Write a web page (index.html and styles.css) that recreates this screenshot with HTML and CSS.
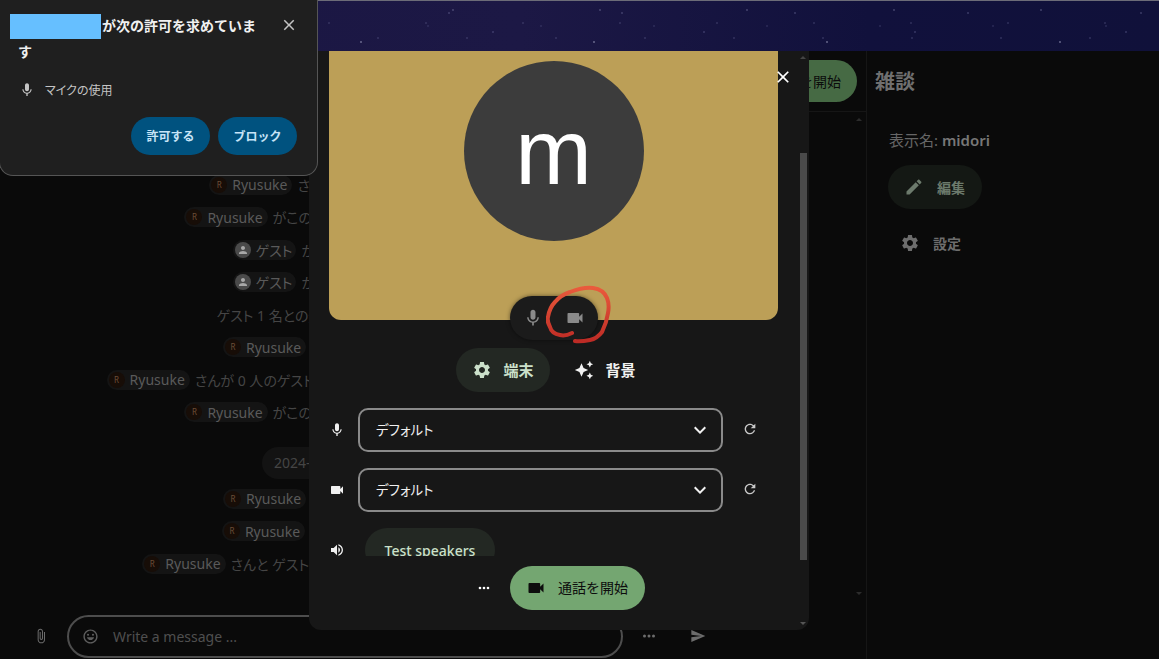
FILE: index.html
```html
<!DOCTYPE html>
<html lang="ja">
<head>
    <meta charset="UTF-8">
    <title>雑談</title>
    <link rel="stylesheet" href="styles.css">
</head>
<body>
    <svg class="sprite" aria-hidden="true">
        <symbol id="i-mic" viewBox="0 0 24 24"><path d="M12 14c1.66 0 2.99-1.34 2.99-3L15 5c0-1.66-1.34-3-3-3S9 3.34 9 5v6c0 1.66 1.34 3 3 3zm5.3-3c0 3-2.54 5.1-5.3 5.1S6.7 14 6.7 11H5c0 3.41 2.72 6.23 6 6.72V21h2v-3.28c3.28-.48 6-3.3 6-6.72h-1.7z"/></symbol>
        <symbol id="i-cam" viewBox="0 0 24 24"><path d="M17 10.5V7c0-.55-.45-1-1-1H4c-.55 0-1 .45-1 1v10c0 .55.45 1 1 1h12c.55 0 1-.45 1-1v-3.5l4 4v-11l-4 4z"/></symbol>
        <symbol id="i-gear" viewBox="0 0 24 24"><path d="M19.14 12.94c.04-.3.06-.61.06-.94 0-.32-.02-.64-.07-.94l2.03-1.58c.18-.14.23-.41.12-.61l-1.92-3.32c-.12-.22-.37-.29-.59-.22l-2.39.96c-.5-.38-1.03-.7-1.62-.94l-.36-2.54c-.04-.24-.24-.41-.48-.41h-3.84c-.24 0-.43.17-.47.41l-.36 2.54c-.59.24-1.13.57-1.62.94l-2.39-.96c-.22-.08-.47 0-.59.22L2.74 8.87c-.12.21-.08.47.12.61l2.03 1.58c-.05.3-.09.63-.09.94s.02.64.07.94l-2.03 1.58c-.18.14-.23.41-.12.61l1.92 3.32c.12.22.37.29.59.22l2.39-.96c.5.38 1.03.7 1.62.94l.36 2.54c.05.24.24.41.48.41h3.84c.24 0 .44-.17.47-.41l.36-2.54c.59-.24 1.13-.56 1.62-.94l2.39.96c.22.08.47 0 .59-.22l1.92-3.32c.12-.22.07-.47-.12-.61l-2.01-1.58zM12 15.6c-1.98 0-3.6-1.62-3.6-3.6s1.62-3.6 3.6-3.6 3.6 1.62 3.6 3.6-1.62 3.6-3.6 3.6z"/></symbol>
        <symbol id="i-spark" viewBox="0 0 24 24"><path d="M19 9l1.25-2.75L23 5l-2.75-1.25L19 1l-1.25 2.75L15 5l2.75 1.25L19 9zm-7.5.5L9 4 6.5 9.5 1 12l5.5 2.5L9 20l2.5-5.5L17 12l-5.5-2.5zM19 15l-1.25 2.75L15 19l2.75 1.25L19 23l1.25-2.75L23 19l-2.75-1.25L19 15z"/></symbol>
        <symbol id="i-chevron" viewBox="0 0 24 24"><path d="M16.59 8.59L12 13.17 7.41 8.59 6 10l6 6 6-6z"/></symbol>
        <symbol id="i-refresh" viewBox="0 0 24 24"><path d="M17.65 6.35C16.2 4.9 14.21 4 12 4c-4.42 0-7.99 3.58-7.99 8s3.57 8 7.99 8c3.73 0 6.84-2.55 7.73-6h-2.08c-.82 2.33-3.04 4-5.65 4-3.31 0-6-2.69-6-6s2.69-6 6-6c1.66 0 3.14.69 4.22 1.78L13 11h7V4l-2.35 2.35z"/></symbol>
        <symbol id="i-volume" viewBox="0 0 24 24"><path d="M3 9v6h4l5 5V4L7 9H3zm13.5 3c0-1.77-1.02-3.29-2.5-4.03v8.05c1.48-.73 2.5-2.25 2.5-4.02zM14 3.23v2.06c2.89.86 5 3.54 5 6.71s-2.11 5.85-5 6.71v2.06c4.01-.91 7-4.49 7-8.77s-2.99-7.86-7-8.77z"/></symbol>
        <symbol id="i-more" viewBox="0 0 24 24"><circle cx="6" cy="12" r="2"/><circle cx="12" cy="12" r="2"/><circle cx="18" cy="12" r="2"/></symbol>
        <symbol id="i-close" viewBox="0 0 24 24"><path d="M19 6.41L17.59 5 12 10.59 6.41 5 5 6.41 10.59 12 5 17.59 6.41 19 12 13.41 17.59 19 19 17.59 13.41 12z"/></symbol>
        <symbol id="i-edit" viewBox="0 0 24 24"><path d="M3 17.25V21h3.75L17.81 9.94l-3.75-3.75L3 17.25zM20.71 7.04c.39-.39.39-1.02 0-1.41l-2.34-2.34c-.39-.39-1.02-.39-1.41 0l-1.83 1.83 3.75 3.75 1.83-1.83z"/></symbol>
        <symbol id="i-send" viewBox="0 0 24 24"><path d="M2.01 21L23 12 2.01 3 2 10l15 2-15 2z"/></symbol>
        <symbol id="i-clip" viewBox="0 0 24 24"><path d="M16.5 6v11.5c0 2.21-1.79 4-4 4s-4-1.79-4-4V5c0-1.38 1.12-2.5 2.5-2.5s2.5 1.12 2.5 2.5v10.5c0 .55-.45 1-1 1s-1-.45-1-1V6H10v9.5c0 1.38 1.12 2.5 2.5 2.5s2.5-1.12 2.5-2.5V5c0-2.21-1.79-4-4-4S7 2.79 7 5v12.5c0 3.04 2.46 5.5 5.5 5.5s5.5-2.46 5.5-5.5V6h-1.5z"/></symbol>
        <symbol id="i-smile" viewBox="0 0 24 24"><path d="M11.99 2C6.47 2 2 6.48 2 12s4.47 10 9.99 10C17.52 22 22 17.52 22 12S17.52 2 11.99 2zM12 20c-4.42 0-8-3.58-8-8s3.58-8 8-8 8 3.58 8 8-3.58 8-8 8z"/><circle cx="8.5" cy="9.5" r="1.5"/><circle cx="15.5" cy="9.5" r="1.5"/><path d="M7 13h10c-.6 2.4-2.6 4-5 4s-4.400-1.600-5-4z"/></symbol>
        <symbol id="i-person" viewBox="0 0 24 24"><path d="M12 12c2.210 0 4-1.790 4-4s-1.790-4-4-4-4 1.790-4 4 1.790 4 4 4zm0 2c-2.670 0-8 1.340-8 4v2h16v-2c0-2.660-5.330-4-8-4z"/></symbol>
    </svg>

    <div class="banner"></div>

    <div class="page">
        <main class="chat">
            <header class="chat-head">
                <button class="start-dim">通話を開始</button>
            </header>
            <div class="chat-list">
                <div class="msg"><span class="chip"><span class="av">R</span>Ryusuke</span>さんが通話を開始しました。通話に参加するには下の通話 。</div>
                <div class="msg"><span class="chip"><span class="av">R</span>Ryusuke</span>がこの会話に参加しました。通話に参加するには下のボタンを押し 。</div>
                <div class="msg"><span class="chip chip-guest"><span class="av av-guest"><svg><use href="#i-person"/></svg></span>ゲスト</span>がこの会話に参加しました。通話に参加するには下の 。</div>
                <div class="msg"><span class="chip chip-guest"><span class="av av-guest"><svg><use href="#i-person"/></svg></span>ゲスト</span>がこの会話に参加しました。通話に参加するには下の 。</div>
                <div class="msg">ゲスト 1 名との通話が終了しました。通話の長さは 1234 分通話でした。</div>
                <div class="msg"><span class="chip"><span class="av">R</span>Ryusuke</span>さんが通話を開始しました。通話に参加するには通話 。</div>
                <div class="msg"><span class="chip"><span class="av">R</span>Ryusuke</span>さんが 0 人のゲストとの通話を開始しました。通話に参加するには下のボタンを押して開始中。</div>
                <div class="msg"><span class="chip"><span class="av">R</span>Ryusuke</span>がこの会話に参加しました。通話に参加するには下のボタンを押し 。</div>
                <div class="date-wrap"><span class="date">2024-03-15 金曜日</span></div>
                <div class="msg"><span class="chip"><span class="av">R</span>Ryusuke</span>さんが通話を開始しました。通話に参加するには通話 。</div>
                <div class="msg"><span class="chip"><span class="av">R</span>Ryusuke</span>さんが通話を開始しました。通話に参加するには 12通。</div>
                <div class="msg"><span class="chip"><span class="av">R</span>Ryusuke</span>さんと ゲスト の通話が終了しました。通話の長さは 12345 分でした。通話履歴の。</div>
                <span class="arrow arrow-up"></span>
                <span class="arrow arrow-down"></span>
            </div>
            <footer class="composer">
                <svg class="icon icon-clip"><use href="#i-clip"/></svg>
                <div class="message-box">
                    <svg class="icon"><use href="#i-smile"/></svg>
                    <span class="placeholder">Write a message ...</span>
                </div>
                <svg class="icon icon-more"><use href="#i-more"/></svg>
                <svg class="icon icon-send"><use href="#i-send"/></svg>
            </footer>
        </main>

        <aside class="side">
            <h2 class="side-title">雑談</h2>
            <p class="side-name">表示名: <b>midori</b></p>
            <button class="side-edit"><svg class="icon"><use href="#i-edit"/></svg>編集</button>
            <button class="side-settings"><svg class="icon"><use href="#i-gear"/></svg>設定</button>
        </aside>
    </div>

    <!-- call setup dialog -->
    <section class="modal">
        <div class="modal-body">
            <div class="tile">
                <div class="avatar">m</div>
                <div class="media-toggle">
                    <svg class="icon"><use href="#i-mic"/></svg>
                    <svg class="icon"><use href="#i-cam"/></svg>
                </div>
            </div>
            <div class="tabs">
                <button class="tab tab-active"><svg class="icon"><use href="#i-gear"/></svg><span class="label">端末</span></button>
                <button class="tab"><svg class="icon"><use href="#i-spark"/></svg><span class="label">背景</span></button>
            </div>
            <div class="device">
                <svg class="icon device-icon"><use href="#i-mic"/></svg>
                <div class="select"><span class="label">デフォルト</span><svg class="icon"><use href="#i-chevron"/></svg></div>
                <svg class="icon refresh"><use href="#i-refresh"/></svg>
            </div>
            <div class="device">
                <svg class="icon device-icon"><use href="#i-cam"/></svg>
                <div class="select"><span class="label">デフォルト</span><svg class="icon"><use href="#i-chevron"/></svg></div>
                <svg class="icon refresh"><use href="#i-refresh"/></svg>
            </div>
            <div class="device">
                <svg class="icon device-icon"><use href="#i-volume"/></svg>
                <button class="test-btn">Test speakers</button>
            </div>
        </div>
        <footer class="modal-foot">
            <svg class="icon icon-dots"><use href="#i-more"/></svg>
            <button class="start"><svg class="icon"><use href="#i-cam"/></svg><span class="label">通話を開始</span></button>
        </footer>
        <svg class="icon modal-close"><use href="#i-close"/></svg>
        <div class="scrollbar"></div>
        <span class="arrow modal-arrow-up"></span>
        <span class="arrow modal-arrow-down"></span>
        <!-- hand drawn mark on the screenshot -->
        <svg class="scribble" viewBox="0 0 66 60">
            <defs>
                <linearGradient id="pen" x1="0" y1="0" x2="0" y2="1">
                    <stop offset="0" stop-color="#ea5a3c"/>
                    <stop offset="1" stop-color="#bd2b25"/>
                </linearGradient>
            </defs>
            <path d="M26 48C22 50 18 51 14 50C8 49 5 46 4 42C2 38 1 36 2 32C3 26 5 21 9 17C13 12 18 9 24 7C32 4 40 2 47 3C54 4 59 8 61 13C63 18 63 23 62 28C61 35 59 41 56 47C53 51 49 54 44 55C39 56 34 57 29 56"/>
        </svg>
    </section>

    <!-- browser permission prompt -->
    <section class="prompt">
        <div class="prompt-head">
            <h3 class="prompt-title"><span class="redact"></span>が次の許可を求めています</h3>
            <svg class="icon prompt-close"><use href="#i-close"/></svg>
        </div>
        <div class="prompt-row"><svg class="icon"><use href="#i-mic"/></svg>マイクの使用</div>
        <div class="prompt-actions">
            <button class="prompt-btn">許可する</button>
            <button class="prompt-btn">ブロック</button>
        </div>
    </section>
</body>
</html>
```

FILE: styles.css
```css
/* General Styles */
* {
    box-sizing: border-box;
}

body {
    margin: 0;
    height: 659px;
    overflow: hidden;
    display: flex;
    flex-direction: column;
    background-color: #0a0a0a;
    color: #5a5a5a;
    font-family: "Noto Sans", "Noto Sans CJK JP", sans-serif;
    font-size: 14px;
    font-feature-settings: "palt";
}

button {
    border: none;
    font-family: inherit;
    font-feature-settings: inherit;
    cursor: pointer;
}

.sprite {
    display: none;
}

.icon {
    width: 20px;
    height: 20px;
    flex: none;
    fill: currentColor;
}

/* the CJK face sits a bit low next to the icons */
.label {
    padding-bottom: 2px;
}

/* Starry header */
.banner {
    height: 51px;
    flex: none;
    border-top: 1px solid #6c6c78;
    background-color: #11113c;
    background-image:
        radial-gradient(circle at 12px 9px, #8d8db4 0, rgba(141, 141, 180, 0) 1px),
        radial-gradient(circle at 71px 31px, #6f6fa2 0, rgba(111, 111, 162, 0) 1px),
        radial-gradient(circle at 38px 22px, #5d5d8a 0, rgba(93, 93, 138, 0) 1px),
        radial-gradient(circle at 103px 12px, #7a7aa8 0, rgba(122, 122, 168, 0) 1px),
        radial-gradient(circle at 128px 41px, #a9a9c8 0, rgba(169, 169, 200, 0) 1.2px),
        radial-gradient(circle at 57px 44px, #55558a 0, rgba(85, 85, 138, 0) 1px),
        radial-gradient(circle at 22px 37px, #5f5f90 0, rgba(95, 95, 144, 0) 1px),
        radial-gradient(circle at 89px 25px, #50507f 0, rgba(80, 80, 127, 0) 1px),
        linear-gradient(90deg, #1a1642 0, #1c1845 45%, #11113c 75%, #10113a 100%);
    background-size: 147px 53px, 211px 47px, 97px 41px, 173px 59px, 233px 51px, 131px 37px, 89px 43px, 113px 31px, 100% 100%;
}

.page {
    flex: 1;
    display: flex;
    min-height: 0;
}

/* Chat column */
.chat {
    width: 867px;
    flex: none;
    display: flex;
    flex-direction: column;
    border-right: 1px solid #161616;
}

.chat-head {
    height: 61px;
    flex: none;
    padding: 9px 9px 0 0;
    display: flex;
    justify-content: flex-end;
    align-items: flex-start;
    border-bottom: 1px solid #161616;
}

.start-dim {
    width: 135px;
    height: 42px;
    border-radius: 21px;
    padding: 0 16px 0 0;
    text-align: right;
    background-color: #466a44;
    color: #0c0c0c;
    font-size: 14px;
    font-feature-settings: normal;
}

.chat-list {
    flex: 1;
    position: relative;
    padding: 56.5px 0 0;
    min-height: 0;
}

.msg {
    height: 32.5px;
    display: flex;
    justify-content: center;
    align-items: center;
    color: #454545;
    white-space: pre;
    padding-right: 6px;
}

.chip {
    display: inline-flex;
    align-items: center;
    gap: 5px;
    height: 20px;
    padding: 0 5px 0 2px;
    margin-right: 5px;
    border-radius: 10px;
    background-color: #141414;
    color: #5a5a5a;
    font-size: 14px;
}

.chip-guest {
    padding-right: 4px;
}

.av {
    width: 16px;
    height: 16px;
    border-radius: 50%;
    background-color: #170d07;
    color: #6e4f38;
    font-size: 8px;
    line-height: 16px;
    text-align: center;
}

.av-guest {
    background-color: #4a4a4a;
    color: #a8a8a8;
}

.av-guest svg {
    display: block;
    width: 12px;
    height: 12px;
    margin: 2px;
    fill: currentColor;
}

.date-wrap {
    display: flex;
    justify-content: center;
    padding-right: 6px;
    margin: 18px 0 4px;
}

.date {
    width: 336px;
    height: 32px;
    padding: 0 12px;
    border-radius: 16px;
    background-color: #131313;
    color: #454545;
    line-height: 32px;
}

.arrow {
    position: absolute;
    width: 0;
    height: 0;
    border-left: 3px solid transparent;
    border-right: 3px solid transparent;
}

.arrow-up {
    top: 6px;
    right: 4px;
    border-bottom: 3px solid #2c2c2c;
}

.arrow-down {
    bottom: 19px;
    right: 4px;
    border-top: 3px solid #2c2c2c;
}

.composer {
    height: 44px;
    flex: none;
    margin-bottom: 1px;
    display: flex;
    align-items: center;
    padding-left: 33px;
    color: #6c6c6c;
}

.icon-clip {
    width: 16px;
    height: 16px;
}

.message-box {
    width: 556px;
    height: 43px;
    margin-left: 18px;
    padding-left: 13px;
    display: flex;
    align-items: center;
    gap: 14px;
    border: 2px solid #4d4d4d;
    border-radius: 22px;
    color: #5e5e5e;
}

.message-box .icon {
    width: 17px;
    height: 17px;
}

.placeholder {
    color: #4f4f4f;
    font-size: 14px;
}

.icon-more {
    margin-left: 17px;
    width: 18px;
    height: 18px;
}

.icon-send {
    width: 16px;
    height: 16px;
    margin-left: 32px;
}

/* Right side panel */
.side {
    flex: 1;
    padding: 0 8px;
}

.side-title {
    margin: 18px 0 0;
    color: #6f6f6f;
    font-size: 20px;
    font-weight: 700;
    line-height: 26px;
}

.side-name {
    margin: 35px 0 0 14px;
    color: #666;
    font-size: 15px;
    line-height: 20px;
}

.side-name b {
    font-weight: 600;
    color: #777;
}

.side-edit,
.side-settings {
    display: flex;
    align-items: center;
    height: 44px;
    font-size: 14px;
    font-weight: 700;
    color: #6c7a6c;
    background: none;
}

.side-edit {
    width: 94px;
    margin: 15px 0 0 13px;
    padding: 0 0 0 16px;
    gap: 13px;
    border-radius: 22px;
    background-color: #141814;
}

.side-settings {
    margin: 12px 0 0 13px;
    padding: 0 0 0 12px;
    gap: 13px;
    color: #6d6d6d;
}

/* Call setup dialog */
.modal {
    position: absolute;
    left: 309px;
    top: 51px;
    width: 500px;
    height: 579px;
    display: flex;
    flex-direction: column;
    background-color: #171717;
    border-radius: 0 0 12px 12px;
    color: #fff;
}

.modal-body {
    height: 505px;
    flex: none;
    padding: 0 31px 0 20px;
    overflow: hidden;
}

.tile {
    position: relative;
    height: 269px;
    padding-top: 10px;
    display: flex;
    justify-content: center;
    align-items: flex-start;
    background-color: #bc9f57;
    border-radius: 0 0 12px 12px;
}

.avatar {
    width: 180px;
    height: 180px;
    border-radius: 50%;
    background-color: #3c3c3c;
    color: #fff;
    font-family: "Liberation Sans", sans-serif;
    font-size: 92px;
    line-height: 182px;
    text-align: center;
}

.media-toggle {
    position: absolute;
    left: 181px;
    bottom: -20px;
    width: 88px;
    height: 44px;
    display: flex;
    align-items: center;
    justify-content: space-between;
    padding: 0 13px;
    border-radius: 22px;
    background-color: #1b1b1b;
    box-shadow: 0 0 4px rgba(0, 0, 0, 0.5);
    color: #8a8a8a;
}

.tabs {
    display: flex;
    justify-content: center;
    gap: 8px;
    margin-top: 28px;
}

.tab {
    width: 94px;
    height: 44px;
    padding: 0 0 0 16px;
    display: flex;
    align-items: center;
    gap: 12px;
    border-radius: 22px;
    background: none;
    color: #f2f2f2;
    font-size: 15px;
    font-weight: 700;
}

.tab-active {
    background-color: #232823;
    color: #cbe0ca;
}

.device {
    display: flex;
    align-items: center;
    margin-top: 16px;
    color: #f0f0f0;
}

.device-icon {
    width: 16px;
    height: 16px;
}

.select {
    width: 365px;
    height: 44px;
    margin-left: 13px;
    padding: 0 9px 0 16px;
    display: flex;
    align-items: center;
    justify-content: space-between;
    border: 2px solid #8a8a8a;
    border-radius: 10px;
    font-size: 13.5px;
}

.select .icon {
    width: 24px;
    height: 24px;
}

.refresh {
    width: 16px;
    height: 16px;
    margin: -2px 0 0 19px;
    color: #c8c8c8;
}

.test-btn {
    width: 130px;
    height: 44px;
    margin-left: 20px;
    border-radius: 22px;
    background-color: #232823;
    color: #cbe0ca;
    font-size: 14px;
    font-weight: 500;
}

.modal-foot {
    flex: 1;
    display: flex;
    align-items: flex-start;
    gap: 18px;
    padding: 10px 0 0 167px;
}

.icon-dots {
    width: 16px;
    height: 16px;
    margin-top: 14px;
}

.start {
    width: 135px;
    height: 44px;
    padding: 0 0 0 16px;
    display: flex;
    align-items: center;
    gap: 12px;
    border-radius: 22px;
    background-color: #74a671;
    color: #0d0d0d;
    font-size: 14px;
    font-feature-settings: normal;
}

.modal-close {
    position: absolute;
    left: 464px;
    top: 16px;
    width: 20px;
    height: 20px;
    color: #fff;
}

.scrollbar {
    position: absolute;
    left: 491px;
    top: 102px;
    width: 7px;
    height: 407px;
    background-color: #4a4a4a;
}

.modal-arrow-up {
    left: 491px;
    top: 5px;
    border-bottom: 3px solid #444;
}

.modal-arrow-down {
    left: 491px;
    bottom: 5px;
    border-top: 3px solid #555;
}

.scribble {
    position: absolute;
    left: 237px;
    top: 234px;
    width: 66px;
    height: 60px;
    fill: none;
    stroke: url(#pen);
    stroke-width: 4;
    stroke-linecap: round;
}

/* Permission prompt */
.prompt {
    position: absolute;
    left: -1px;
    top: -1px;
    width: 319px;
    height: 177px;
    padding: 15px 2px 0 18px;
    background-color: #1f1f1f;
    border: 1px solid #555;
    border-top: none;
    border-radius: 0 0 14px 14px;
    color: #f0f0f0;
}

.prompt-head {
    display: flex;
    align-items: flex-start;
    justify-content: space-between;
}

.prompt-title {
    width: 245px;
    margin: 0;
    font-size: 14px;
    font-weight: 700;
    font-feature-settings: normal;
    line-height: 24px;
}

.redact {
    display: inline-block;
    width: 91px;
    height: 25px;
    margin: 0 1px 0 -8px;
    vertical-align: middle;
    position: relative;
    top: -1px;
    background-color: #66bfff;
}

.prompt-close {
    width: 18px;
    height: 18px;
    margin: 2px 17px 0 0;
    color: #c4c4c4;
}

.prompt-row {
    display: flex;
    align-items: center;
    gap: 10px;
    margin: 17px 0 0 1px;
    font-size: 12px;
    color: #c4c4c4;
}

.prompt-row .icon {
    width: 16px;
    height: 16px;
}

.prompt-actions {
    display: flex;
    justify-content: flex-end;
    gap: 8px;
    margin: 18px 18px 0 0;
}

.prompt-btn {
    width: 79px;
    height: 38px;
    border-radius: 19px;
    background-color: #00527f;
    color: #c7e4f7;
    font-size: 12px;
    font-weight: 700;
    font-feature-settings: normal;
}
```
